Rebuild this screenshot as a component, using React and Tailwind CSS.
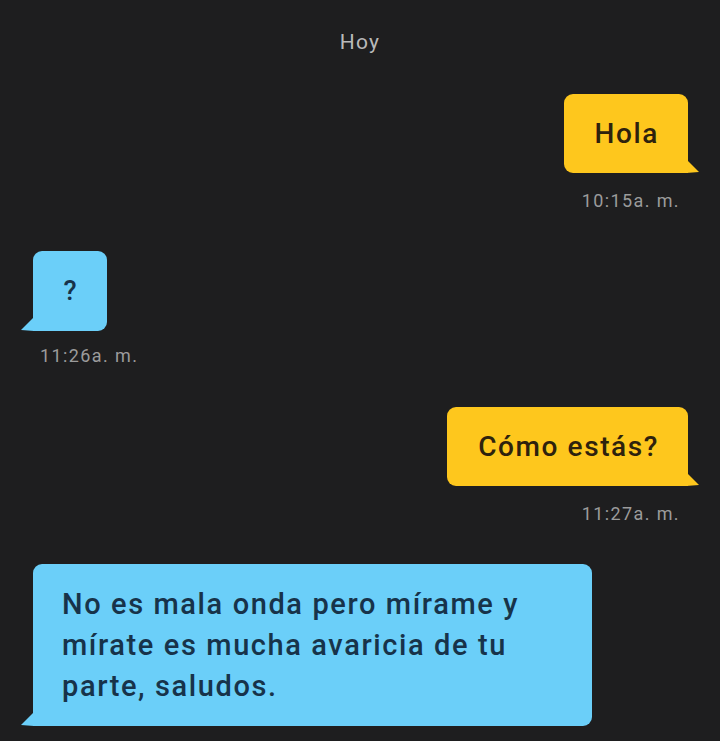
const font = { fontFamily: "Roboto, 'Noto Sans', sans-serif" };

function Tail({ side, color }) {
  const right = side === "right";
  return (
    <svg
      width="14"
      height="14"
      viewBox="0 0 14 14"
      className={`absolute bottom-0 ${right ? "right-[-12px]" : "left-[-13px]"}`}
    >
      <path d={right ? "M0 0 L13 13 L0 14 Z" : "M14 0 L1 13 L14 14 Z"} fill={color} />
    </svg>
  );
}

function Outgoing({ text, time, mt }) {
  return (
    <div className={`flex flex-col items-end pr-[32px] ${mt}`}>
      <div className="relative h-[79px] flex items-center pl-[31px] pr-[29px] bg-[#fec71d] rounded-[9px] rounded-br-none">
        <span className="text-[28px] font-medium text-[#2e220d] tracking-[1.6px]">{text}</span>
        <Tail side="right" color="#fec71d" />
      </div>
      <div className="mt-[18px] mr-[8px] h-[20px] leading-[20px] text-[18px] tracking-[1.4px] text-[#9b9b9b]">{time}</div>
    </div>
  );
}

export default function App() {
  return (
    <div className="w-[720px] h-[741px] overflow-hidden bg-[#1e1e1f]" style={font}>
      <div className="pt-[30px] h-[54px] text-center text-[21px] leading-[24px] tracking-[1.2px] text-[#b9b9b9]">Hoy</div>

      <Outgoing text="Hola" time="10:15a. m." mt="mt-[40px]" />

      <div className="flex flex-col items-start pl-[33px] mt-[40px]">
        <div className="relative w-[74px] h-[80px] flex items-center justify-center bg-[#6bcff9] rounded-[9px] rounded-bl-none">
          <span className="text-[27px] font-medium text-[#17334a]">?</span>
          <Tail side="left" color="#6bcff9" />
        </div>
        <div className="mt-[15px] ml-[7px] h-[20px] leading-[20px] text-[18px] tracking-[1.4px] text-[#9b9b9b]">11:26a. m.</div>
      </div>

      <Outgoing text="Cómo estás?" time="11:27a. m." mt="mt-[41px]" />

      <div className="flex flex-col items-start pl-[33px] mt-[40px]">
        <div className="relative w-[559px] h-[162px] pl-[29px] pr-[20px] pt-[20px] bg-[#6bcff9] rounded-[9px] rounded-bl-none">
          <p className="text-[29px] leading-[41px] font-medium tracking-[1.6px] text-[#17334a]">
            No es mala onda pero mírame y
            <br />
            mírate es mucha avaricia de tu
            <br />
            parte, saludos.
          </p>
          <Tail side="left" color="#6bcff9" />
        </div>
      </div>
    </div>
  );
}
